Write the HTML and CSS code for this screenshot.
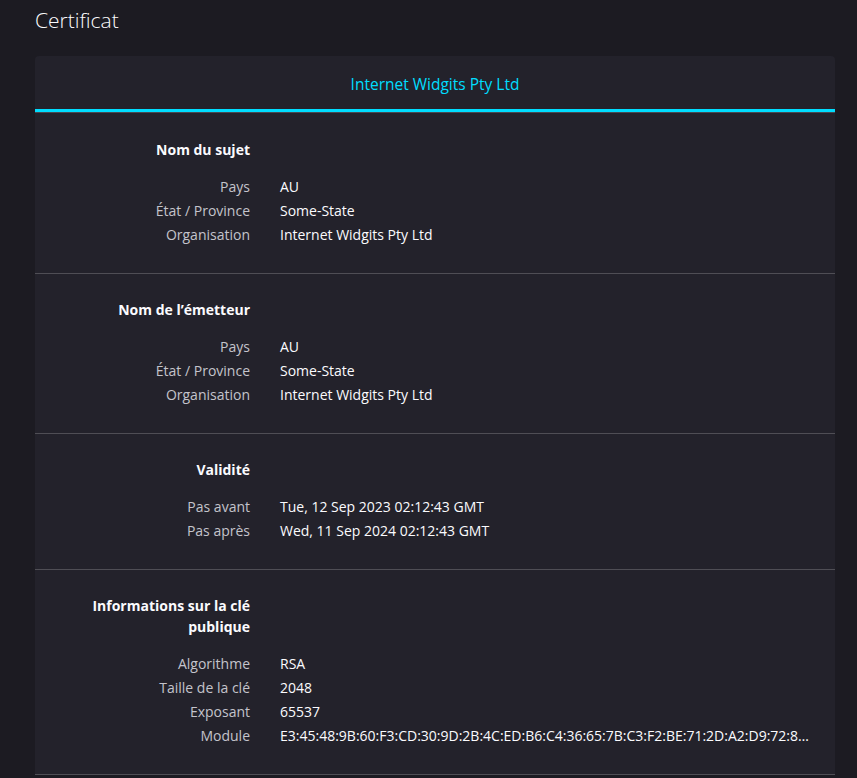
FILE: index.html
```html
<!DOCTYPE html>
<html lang="fr">
<head>
<meta charset="utf-8">
<title>Certificat</title>
<link rel="stylesheet" href="styles.css">
</head>
<body>
<h1 class="page-title">Certificat</h1>
<div class="card">
  <div class="tabs">
    <div class="tab selected">Internet Widgits Pty Ltd</div>
  </div>
  <section class="info-group">
    <div class="group-title">Nom du sujet</div>
    <div class="row"><span class="label">Pays</span><span class="value">AU</span></div>
    <div class="row"><span class="label">État / Province</span><span class="value">Some-State</span></div>
    <div class="row"><span class="label">Organisation</span><span class="value">Internet Widgits Pty Ltd</span></div>
  </section>
  <section class="info-group">
    <div class="group-title">Nom de l’émetteur</div>
    <div class="row"><span class="label">Pays</span><span class="value">AU</span></div>
    <div class="row"><span class="label">État / Province</span><span class="value">Some-State</span></div>
    <div class="row"><span class="label">Organisation</span><span class="value">Internet Widgits Pty Ltd</span></div>
  </section>
  <section class="info-group">
    <div class="group-title">Validité</div>
    <div class="row"><span class="label">Pas avant</span><span class="value">Tue, 12 Sep 2023 02:12:43 GMT</span></div>
    <div class="row"><span class="label">Pas après</span><span class="value">Wed, 11 Sep 2024 02:12:43 GMT</span></div>
  </section>
  <section class="info-group">
    <div class="group-title">Informations sur la clé publique</div>
    <div class="row"><span class="label">Algorithme</span><span class="value">RSA</span></div>
    <div class="row"><span class="label">Taille de la clé</span><span class="value">2048</span></div>
    <div class="row"><span class="label">Exposant</span><span class="value">65537</span></div>
    <div class="row"><span class="label">Module</span><span class="value truncate">E3:45:48:9B:60:F3:CD:30:9D:2B:4C:ED:B6:C4:36:65:7B:C3:F2:BE:71:2D:A2:D9:72:8C:1F:0A:55:3E:91:6B:D4:E0:27:AF:13:58</span></div>
  </section>
</div>
</body>
</html>
```
FILE: styles.css
```css
html, body {
  margin: 0;
  padding: 0;
  background: #1c1b22;
  color: #fbfbfe;
  font-family: "Open Sans", "Noto Sans", sans-serif;
  font-size: 14px;
}

body {
  padding: 0 22px 0 35px;
}

.page-title {
  margin: 0;
  padding-top: 4px;
  font-size: 21px;
  font-weight: 300;
  line-height: 32px;
  color: #fbfbfe;
  height: 52px;
}

.card {
  width: 800px;
  background: #23222b;
  border-radius: 4px 4px 0 0;
}

.tabs {
  border-bottom: 1px solid #4a4950;
}

.tab {
  height: 53px;
  line-height: 56px;
  text-align: center;
  color: #00ddff;
  font-size: 15.5px;
  border-bottom: 3px solid #00ddff;
}

.info-group {
  padding: 25px 0 26px;
  border-bottom: 1px solid #4f4e55;
}

.info-group:first-of-type {
  padding-top: 26px;
}

.group-title {
  width: 215px;
  text-align: right;
  font-weight: 700;
  line-height: 21px;
  margin-bottom: 15px;
  color: #fbfbfe;
}

.row {
  display: grid;
  grid-template-columns: 215px 532px;
  column-gap: 30px;
  line-height: 24px;
}

.label {
  text-align: right;
  color: #c4c4cc;
}

.value {
  color: #fbfbfe;
  white-space: nowrap;
}

.truncate {
  overflow: hidden;
  text-overflow: ellipsis;
}
```
